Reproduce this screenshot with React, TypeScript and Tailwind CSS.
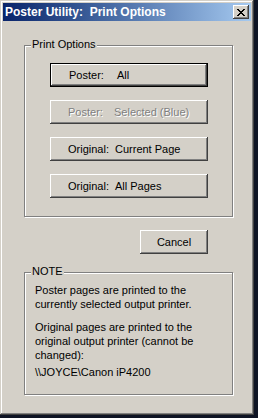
import React from 'react';

const FONT = { fontFamily: '"Liberation Sans", Arial, sans-serif' };

function ClassicButton({
  children,
  isDefault = false,
  disabled = false,
  className = '',
}: {
  children: React.ReactNode;
  isDefault?: boolean;
  disabled?: boolean;
  className?: string;
}) {
  return (
    <button
      type="button"
      disabled={disabled}
      className={`flex h-[24px] items-center bg-[#D4D0C8] text-[11px] leading-[13px] ${
        isDefault
          ? 'border border-black shadow-[inset_-1px_-1px_#404040,inset_1px_1px_#fff,inset_-2px_-2px_#808080]'
          : 'shadow-[inset_-1px_-1px_#404040,inset_1px_1px_#fff,inset_-2px_-2px_#808080]'
      } ${disabled ? 'text-[#808080] [text-shadow:1px_1px_0_#fff]' : 'text-black'} ${className}`}
    >
      {children}
    </button>
  );
}

function GroupBox({
  label,
  className = '',
  children,
}: {
  label: string;
  className?: string;
  children: React.ReactNode;
}) {
  return (
    <div
      className={`relative w-[209px] border border-[#808080] shadow-[1px_1px_0_#fff,inset_1px_1px_0_#fff] ${className}`}
    >
      <span className="absolute -top-[8px] left-[6px] bg-[#D4D0C8] px-[1px] text-[11px] leading-[13px] text-black">
        {label}
      </span>
      {children}
    </div>
  );
}

export default function App() {
  return (
    <div className="flex h-[418px] w-[258px] items-start bg-[#0e1424]" style={FONT}>
      <div className="flex h-[415px] w-[254px] flex-col bg-[#D4D0C8] p-[3px] shadow-[inset_-1px_-1px_#404040,inset_1px_1px_#D4D0C8,inset_-2px_-2px_#808080,inset_2px_2px_#fff]">
        {/* Title bar */}
        <div className="flex h-[18px] items-center justify-between bg-gradient-to-r from-[#0A246A] to-[#A6CAF0] pl-[2px] pr-[2px]">
          <span className="text-[12px] font-bold leading-[14px] text-white">
            Poster Utility:&nbsp; Print Options
          </span>
          <button
            type="button"
            className="flex h-[14px] w-[16px] items-center justify-center bg-[#D4D0C8] shadow-[inset_-1px_-1px_#404040,inset_1px_1px_#fff,inset_-2px_-2px_#808080]"
          >
            <svg width="8" height="7" viewBox="0 0 8 7" shapeRendering="crispEdges">
              <path
                d="M0 0h2v1h-2zM6 0h2v1h-2zM1 1h2v1h-2zM5 1h2v1h-2zM2 2h4v1h-4zM3 3h2v1h-2zM2 4h4v1h-4zM1 5h2v1h-2zM5 5h2v1h-2zM0 6h2v1h-2zM6 6h2v1h-2z"
                fill="#000"
              />
            </svg>
          </button>
        </div>

        {/* Body */}
        <div className="flex flex-col px-[21px]">
          <GroupBox label="Print Options" className="mt-[24px] flex flex-col gap-[13px] pt-[17px] pb-[18px]">
            <ClassicButton isDefault className="ml-[25px] w-[158px] pl-[18px]">
              <span className="inline-block w-[48px] text-left">Poster:</span>
              <span>All</span>
            </ClassicButton>
            <ClassicButton disabled className="ml-[25px] w-[158px] pl-[18px]">
              <span className="inline-block w-[46px] text-left">Poster:</span>
              <span>Selected (Blue)</span>
            </ClassicButton>
            <ClassicButton className="ml-[25px] w-[158px] pl-[18px]">
              <span className="inline-block w-[47px] text-left">Original:</span>
              <span>Current Page</span>
            </ClassicButton>
            <ClassicButton className="ml-[25px] w-[158px] pl-[18px]">
              <span className="inline-block w-[47px] text-left">Original:</span>
              <span>All Pages</span>
            </ClassicButton>
          </GroupBox>

          <ClassicButton className="mt-[13px] ml-[116px] w-[68px] justify-center">
            Cancel
          </ClassicButton>

          <GroupBox label="NOTE" className="mt-[18px] px-[10px] pt-[10px] pb-[15px] text-[11px] leading-[14px] text-black">
            <p>
              Poster pages are printed to the
              <br />
              currently selected output printer.
            </p>
            <p className="mt-[9px]">
              Original pages are printed to the
              <br />
              original output printer (cannot be
              <br />
              changed):
            </p>
            <p className="mt-[3px]">\\JOYCE\Canon iP4200</p>
          </GroupBox>
        </div>
      </div>
    </div>
  );
}
